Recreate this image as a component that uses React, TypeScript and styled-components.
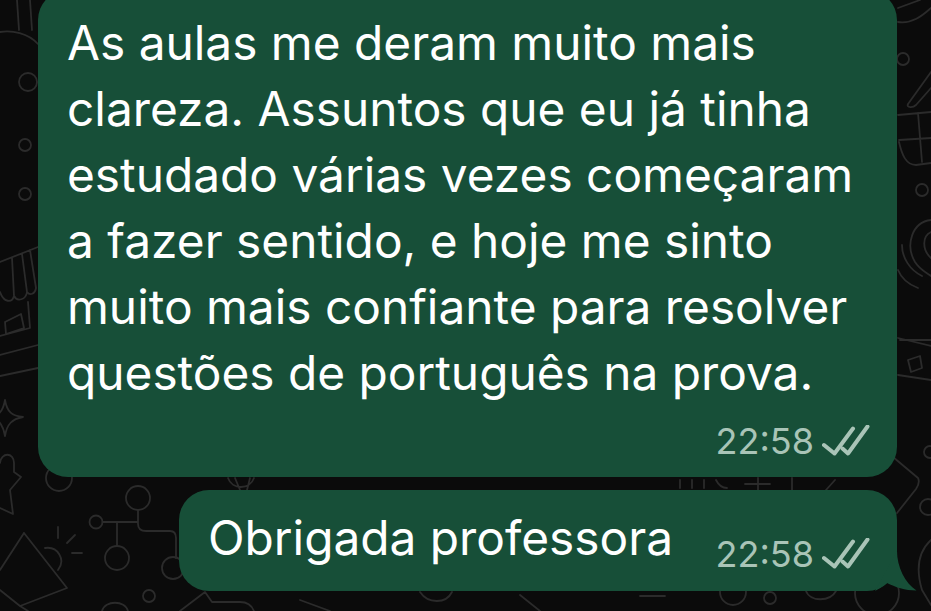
import type { FC } from 'react';
import styled, { createGlobalStyle } from 'styled-components';

const GlobalStyle = createGlobalStyle`
  html, body {
    margin: 0;
    height: 100%;
    background: #0b0b0b;
  }
`;

const Screen = styled.div`
  position: relative;
  width: 931px;
  height: 611px;
  overflow: hidden;
  background: #0b0b0b;
  font-family: Inter, 'Liberation Sans', sans-serif;
`;

const Wallpaper = styled.svg`
  position: absolute;
  inset: 0;
  fill: none;
  stroke: #2b2b2b;
  stroke-width: 1.8;
  stroke-linecap: round;
  stroke-linejoin: round;
`;

const Thread = styled.div`
  position: relative;
  display: flex;
  flex-direction: column;
  align-items: flex-end;
  gap: 13px;
  padding-right: 34px;
  margin-top: -10px;
`;

const Bubble = styled.div`
  position: relative;
  box-sizing: border-box;
  background: #174f38;
  border-radius: 30px;
  color: #fff;
`;

const LongBubble = styled(Bubble)`
  width: 859px;
  height: 487px;
  padding: 20px 30px 0 29px;
`;

const ShortBubble = styled(Bubble)`
  display: flex;
  align-items: flex-start;
  justify-content: space-between;
  width: 718px;
  height: 101px;
  padding: 15px 27px 0 29px;
`;

const Message = styled.div`
  font-size: 47.8px;
  line-height: 66px;
  white-space: nowrap;
`;

const Meta = styled.div`
  display: flex;
  align-items: center;
  justify-content: flex-end;
  gap: 8px;
  color: #a9c4b7;
  font-size: 36px;
  line-height: 40px;
`;

const LongMeta = styled(Meta)`
  margin-top: 15px;
  margin-right: -3px;
`;

const ShortMeta = styled(Meta)`
  margin-top: 29px;
`;

const Ticks = styled.svg`
  width: 48px;
  height: 32px;
  fill: none;
  stroke: #a9c4b7;
  stroke-width: 4;
  stroke-linecap: round;
  stroke-linejoin: round;
`;

const Tail = styled.svg`
  position: absolute;
  right: -20px;
  bottom: 0;
  width: 42px;
  height: 40px;
  fill: #174f38;
`;

const DoubleCheck: FC = () => (
  <Ticks viewBox="0 0 48 32">
    <path d="M2 20 L12.5 28.5 L31 3.5" />
    <path d="M20.5 23.5 L26 28.5 L45.5 1.5" />
  </Ticks>
);

const Doodles: FC = () => (
  <Wallpaper width="931" height="611" viewBox="0 0 931 611">
    {/* left edge */}
    <path d="M0 32 C12 30 28 33 38 44 M17 0 L19 30 M30 0 L32 30" />
    <circle cx="28" cy="82" r="9" />
    <circle cx="25" cy="145" r="6" />
    <circle cx="25" cy="194" r="6" />
    {/* shop front */}
    <path d="M0 262 L38 247 M0 292 C4 303 12 303 14 296 C17 302 26 300 27 292 C30 296 35 294 36 288 M12 258 L14 296 M22 254 L27 292 M30 250 L36 288" />
    <path d="M0 336 L30 328 L28 302 M5 322 L21 314 L24 328 L6 334 Z" />
    <path d="M0 355 L38 345 M0 376 L38 368" />
    <path d="M5 400 C7 412 12 416 23 417 C12 419 7 424 5 436 C3 424 -2 419 -8 417 C-2 416 3 412 5 400 Z" />
    <path d="M0 463 C1 452 14 452 14 463 L14 472 L21 477 L10 490 L13 514 L0 508" />
    <circle cx="59" cy="478" r="13" />
    {/* connected nodes */}
    <circle cx="138" cy="498" r="12" />
    <circle cx="96" cy="522" r="6.5" />
    <circle cx="117" cy="558" r="12" />
    <circle cx="173" cy="568" r="11" />
    <circle cx="149" cy="596" r="6" />
    <path d="M102.5 522 H138 M138 510 V524 C138 529 141 531 146 531 H170 C174 531 176 534 176 538 V558 M117 522 V546" />
    {/* megaphone */}
    <path d="M24 533 L0 570 M24 533 L67 588 L20 606 L0 590 M45 548 C58 546 66 560 58 570 M20 606 L28 611" />
    <path d="M58 527 V538 M67 543 L75 535 M72 553 H82" />
    <path d="M102 611 C105 600 125 600 128 611 M180 611 L205 592 L212 602 H240 C248 602 252 606 254 611" />
    {/* between the bubbles */}
    <path d="M680 480 V488 M692 480 V488 M704 480 V488 M716 480 C718 484 722 488 727 488 M745 484 H770 M758 478 V490 M792 478 V490 M835 480 L826 490" />
    <path d="M228 478 C232 490 250 490 254 478 M235 478 L240 490 M250 478 L247 490" />
    {/* right edge */}
    <path d="M898 22 C912 24 922 16 931 8 M898 8 L920 0" />
    <circle cx="903" cy="59" r="6" />
    <path d="M908 104 L931 72 M908 104 C906 108 913 108 916 105 L931 88" />
    <path d="M898 115 L931 112 M918 113 L922 162 M899 140 L931 138 M899 142 C902 155 906 165 916 165 L931 163" />
    <circle cx="922" cy="190" r="6" />
    <path d="M931 220 C912 222 905 245 915 262 C920 270 926 272 931 276 M931 232 C922 236 922 250 931 258 M902 245 C902 258 910 270 922 276 M898 270 C902 280 910 285 918 288" />
    <path d="M898 338 L931 346 M898 375 L931 380 M900 340 L931 340 M908 360 L920 356 L922 368 L911 372 Z" />
    <circle cx="930" cy="452" r="6" />
    <path d="M893 457 L918 478 C920 482 918 486 916 489 L897 513" />
    <circle cx="928" cy="507" r="8" />
    <path d="M931 540 C918 552 916 570 922 590 L931 605" />
    <circle cx="877" cy="593" r="22" />
    {/* bottom strip */}
    <circle cx="733" cy="592" r="13" />
    <circle cx="770" cy="598" r="6" />
    <path d="M806 591 C810 602 830 602 836 591" />
    <path d="M300 600 L330 611 M420 592 C428 604 446 604 452 592 M520 595 L540 611 M640 596 H665" />
  </Wallpaper>
);

const App: FC = () => (
  <Screen>
    <GlobalStyle />
    <Doodles />
    <Thread>
      <LongBubble>
        <Message>
          As aulas me deram muito mais
          <br />
          clareza. Assuntos que eu já tinha
          <br />
          estudado várias vezes começaram
          <br />
          a fazer sentido, e hoje me sinto
          <br />
          muito mais confiante para resolver
          <br />
          questões de português na prova.
        </Message>
        <LongMeta>
          22:58
          <DoubleCheck />
        </LongMeta>
      </LongBubble>
      <ShortBubble>
        <Message>Obrigada professora</Message>
        <ShortMeta>
          22:58
          <DoubleCheck />
        </ShortMeta>
        <Tail viewBox="0 0 42 40">
          <path d="M22 0 C22 16 30 32 41.5 39.5 C30 39.5 20 36 12 32 C8 35 4 38 0 40 Z" />
        </Tail>
      </ShortBubble>
    </Thread>
  </Screen>
);

export default App;
